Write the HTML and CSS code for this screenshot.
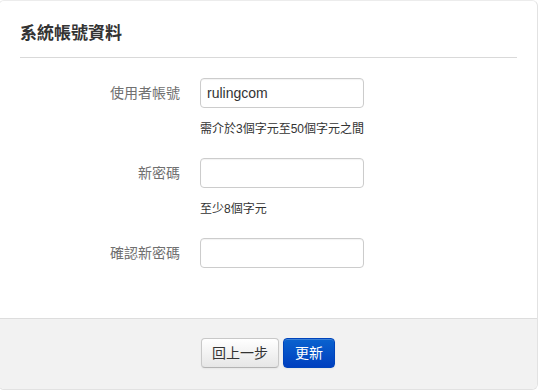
FILE: index.html
```html
<!DOCTYPE html>
<html lang="zh-Hant">
<head>
<meta charset="utf-8">
<title>系統帳號資料</title>
<link rel="stylesheet" href="styles.css">
</head>
<body>
<div class="modal">
  <div class="modal-header">
    <h3 class="modal-title">系統帳號資料</h3>
  </div>
  <form class="modal-body">
    <div class="row">
      <label class="label">使用者帳號</label>
      <div class="field">
        <input class="input" type="text" value="rulingcom">
        <div class="help">需介於3個字元至50個字元之間</div>
      </div>
    </div>
    <div class="row">
      <label class="label">新密碼</label>
      <div class="field">
        <input class="input" type="password">
        <div class="help">至少8個字元</div>
      </div>
    </div>
    <div class="row">
      <label class="label">確認新密碼</label>
      <div class="field">
        <input class="input" type="password">
      </div>
    </div>
  </form>
  <div class="modal-footer">
    <button class="btn" type="button">回上一步</button>
    <button class="btn btn-primary" type="button">更新</button>
  </div>
</div>
</body>
</html>
```

FILE: styles.css
```css
html, body {
  margin: 0;
  padding: 0;
  background: #ffffff;
}

body {
  font-family: "Liberation Sans", "Noto Sans CJK TC", sans-serif;
  color: #333333;
  font-size: 14px;
}

.modal {
  box-sizing: border-box;
  width: 540px;
  height: 390px;
  margin-left: -2px;
  border: 1px solid #e2e2e2;
  border-top-color: #ececec;
  border-radius: 6px;
  background: #ffffff;
  display: flex;
  flex-direction: column;
  overflow: hidden;
}

.modal-header {
  padding: 0 20px 0 21px;
}

.modal-title {
  margin: 0;
  padding: 21px 0 12px;
  font-size: 17px;
  font-weight: bold;
  line-height: 23px;
  color: #333333;
  border-bottom: 1px solid #d9d9d9;
}

.modal-body {
  flex: 1;
  margin: 0;
  padding: 20px 0 0;
  display: flex;
  flex-direction: column;
  gap: 21px;
}

.row {
  display: flex;
  align-items: flex-start;
}

.label {
  width: 199px;
  padding-right: 20px;
  box-sizing: border-box;
  text-align: right;
  font-size: 14px;
  line-height: 30px;
  color: #707070;
  margin-left: 2px;
}

.field {
  display: flex;
  flex-direction: column;
}

.input {
  box-sizing: border-box;
  width: 164px;
  height: 30px;
  margin: 0;
  padding: 4px 6px;
  border: 1px solid #cccccc;
  border-radius: 4px;
  font-family: "Liberation Sans", "Noto Sans CJK TC", sans-serif;
  font-size: 14px;
  color: #333333;
  background: #ffffff;
  box-shadow: inset 0 1px 1px rgba(0, 0, 0, 0.05);
}

.help {
  margin-top: 13px;
  font-size: 12px;
  line-height: 16px;
  color: #333333;
}

.modal-footer {
  height: 71px;
  box-sizing: border-box;
  padding: 19px 0 0;
  background: #f2f2f2;
  border-top: 1px solid #dddddd;
  display: flex;
  justify-content: center;
  align-items: flex-start;
  gap: 4px;
}

.btn {
  box-sizing: border-box;
  height: 30px;
  margin: 0;
  padding: 0 10px;
  font-family: "Liberation Sans", "Noto Sans CJK TC", sans-serif;
  font-size: 14px;
  line-height: 28px;
  color: #333333;
  border: 1px solid #c8c8c8;
  border-bottom-color: #b3b3b3;
  border-radius: 4px;
  background: linear-gradient(#ffffff, #e6e6e6);
  box-shadow: inset 0 1px 0 rgba(255, 255, 255, 0.2), 0 1px 2px rgba(0, 0, 0, 0.05);
}

.btn-primary {
  padding: 0 11px;
  color: #ffffff;
  border-color: #0044bb;
  background: linear-gradient(#0a63cf, #003fbf);
}
```
